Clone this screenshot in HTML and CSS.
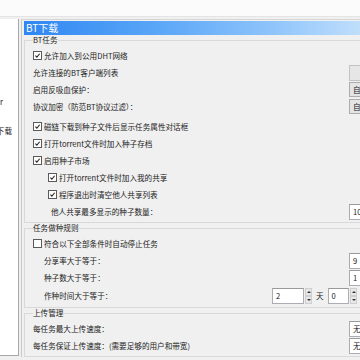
FILE: index.html
```html
<!DOCTYPE html>
<html lang="zh-CN">
<head>
  <meta charset="UTF-8">
  <title>BT下载 设置</title>
  <link rel="stylesheet" href="styles.css">
</head>
<body>

<div class="topbar"></div>

<div class="main">
  <div class="tree">
    <div class="tree-item first"><span>Server</span></div>
    <div class="tree-item second"><span>BT下载</span></div>
  </div>

  <div class="page">
    <div class="header">BT下载</div>

    <fieldset class="group g1">
      <legend>BT任务</legend>
      <div class="row first">
        <span class="cb on"><svg viewBox="0 0 9 9"><path d="M1.8 4.6 L3.7 6.6 L7.3 2.2"/></svg></span>
        <span>允许加入到公用DHT网络</span>
      </div>
      <div class="row">
        <span>允许连接的BT客户端列表</span>
        <span class="btn"></span>
      </div>
      <div class="row">
        <span>启用反吸血保护：</span>
        <span class="combo">自动</span>
      </div>
      <div class="row">
        <span>协议加密（防范BT协议过滤）：</span>
        <span class="combo">自动</span>
      </div>
      <div class="row gap3">
        <span class="cb on"><svg viewBox="0 0 9 9"><path d="M1.8 4.6 L3.7 6.6 L7.3 2.2"/></svg></span>
        <span>磁链下载到种子文件后显示任务属性对话框</span>
      </div>
      <div class="row">
        <span class="cb on"><svg viewBox="0 0 9 9"><path d="M1.8 4.6 L3.7 6.6 L7.3 2.2"/></svg></span>
        <span>打开torrent文件时加入种子存档</span>
      </div>
      <div class="row">
        <span class="cb on"><svg viewBox="0 0 9 9"><path d="M1.8 4.6 L3.7 6.6 L7.3 2.2"/></svg></span>
        <span>启用种子市场</span>
      </div>
      <div class="row sub">
        <span class="cb on"><svg viewBox="0 0 9 9"><path d="M1.8 4.6 L3.7 6.6 L7.3 2.2"/></svg></span>
        <span>打开torrent文件时加入我的共享</span>
      </div>
      <div class="row sub">
        <span class="cb on"><svg viewBox="0 0 9 9"><path d="M1.8 4.6 L3.7 6.6 L7.3 2.2"/></svg></span>
        <span>程序退出时清空他人共享列表</span>
      </div>
      <div class="row sub2">
        <span>他人共享最多显示的种子数量：</span>
        <span class="field">10</span>
      </div>
    </fieldset>

    <fieldset class="group g2">
      <legend>任务做种规则</legend>
      <div class="row first">
        <span class="cb"></span>
        <span>符合以下全部条件时自动停止任务</span>
      </div>
      <div class="row ind">
        <span>分享率大于等于：</span>
        <span class="field">9</span>
      </div>
      <div class="row ind">
        <span>种子数大于等于：</span>
        <span class="field">1</span>
      </div>
      <div class="row ind gap1">
        <span class="spin-label">作种时间大于等于：</span>
        <span class="field small w31">2</span>
        <span class="spinner"><i class="up"></i><i class="down"></i></span>
        <span class="unit">天</span>
        <span class="field small w20">0</span>
        <span class="spinner"><i class="up"></i><i class="down"></i></span>
        <span class="unit">小时</span>
      </div>
    </fieldset>

    <fieldset class="group g3">
      <legend>上传管理</legend>
      <div class="row first">
        <span>每任务最大上传速度：</span>
        <span class="field">无</span>
      </div>
      <div class="row">
        <span>每任务保证上传速度：(需要足够的用户和带宽)</span>
        <span class="field">无</span>
      </div>
    </fieldset>
  </div>
</div>

</body>
</html>
```

FILE: styles.css
```css
body {
  margin: 0;
  width: 360px;
  height: 360px;
  overflow: hidden;
  background: #f0f0f0;
  font-family: "Noto Sans CJK SC", "Noto Sans", sans-serif;
  font-size: 7.6px;
  color: #222;
}
.topbar {
  height: 16px;
  background: #fbfbfb;
  border-bottom: 1px solid #e4e4e4;
}
.main {
  display: flex;
  padding-top: 2px;
}
.tree {
  flex: none;
  width: 19px;
  height: 337px;
  background: #fff;
  border-right: 1px solid #a8a8a8;
  border-bottom: 1px solid #a8a8a8;
  overflow: hidden;
  padding-top: 74px;
  box-sizing: border-box;
}
.tree-item {
  display: flex;
  justify-content: flex-end;
  height: 17px;
  align-items: center;
  white-space: nowrap;
}
.tree-item.first {
  padding-right: 15px;
}
.tree-item.second {
  margin-top: 12px;
  padding-right: 6px;
}
.page {
  flex: none;
  width: 380px;
  margin-left: 2px;
  border-left: 1px solid #c9c9c9;
  border-top: 1px solid #d6d6d6;
  padding: 1px 0 0 2px;
}
.header {
  height: 14px;
  line-height: 14px;
  padding-left: 2px;
  color: #fff;
  font-size: 10px;
  background: linear-gradient(to right, #2f87f2, #5aa6f8 35%, #8ec4fb 65%, #d8ebfc);
}
.group {
  margin: 0;
  min-width: 0;
  width: 348px;
  padding: 0 8px 2px 8px;
  border: 1px solid #d9d9d9;
  border-right: none;
}
.group legend {
  padding: 0;
  line-height: 10px;
}
.g2 {
  padding-bottom: 3px;
}
.row {
  display: flex;
  align-items: center;
  height: 17px;
  white-space: nowrap;
}
.row.first {
  margin-top: 2px;
}
.row.gap3 {
  margin-top: 3px;
}
.row.gap1 {
  margin-top: 1px;
}
.row.sub {
  padding-left: 15px;
}
.row.sub2 {
  padding-left: 18px;
}
.row.ind {
  padding-left: 11px;
}
.cb {
  flex: none;
  width: 7px;
  height: 7px;
  margin-right: 2px;
  border: 1px solid #5a5a5a;
  background: #fff;
  display: flex;
}
.cb svg {
  width: 7px;
  height: 7px;
}
.cb path {
  fill: none;
  stroke: #222;
  stroke-width: 1.3;
}
.btn, .combo, .field {
  margin-left: auto;
  flex: none;
  width: 30px;
  height: 14px;
  line-height: 14px;
  box-sizing: content-box;
}
.btn {
  background: #e6e6e6;
  border: 1px solid #c2c2c2;
}
.combo {
  background: #e4e4e4;
  border: 1px solid #acacac;
  padding-left: 3px;
  width: 27px;
  height: 13px;
  line-height: 13px;
}
.field {
  background: #fff;
  border: 1px solid #abadb3;
  border-top-color: #9a9a9a;
  padding-left: 3px;
  width: 27px;
}
.spin-label {
  flex: none;
  width: 228px;
}
.field.small {
  margin-left: 0;
}
.w31 {
  width: 27px;
}
.w20 {
  width: 16px;
}
.spinner {
  flex: none;
  display: flex;
  flex-direction: column;
  width: 7px;
  height: 16px;
  margin-left: 1px;
}
.spinner i {
  flex: 1;
  background: #e8e8e8;
  border: 1px solid #cfcfcf;
  position: relative;
}
.spinner i::after {
  content: "";
  position: absolute;
  left: 1px;
  top: 2px;
  border-left: 2px solid transparent;
  border-right: 2px solid transparent;
}
.spinner .up::after {
  border-bottom: 2px solid #333;
}
.spinner .down::after {
  border-top: 2px solid #333;
}
.unit {
  margin: 0 4px;
}
```
